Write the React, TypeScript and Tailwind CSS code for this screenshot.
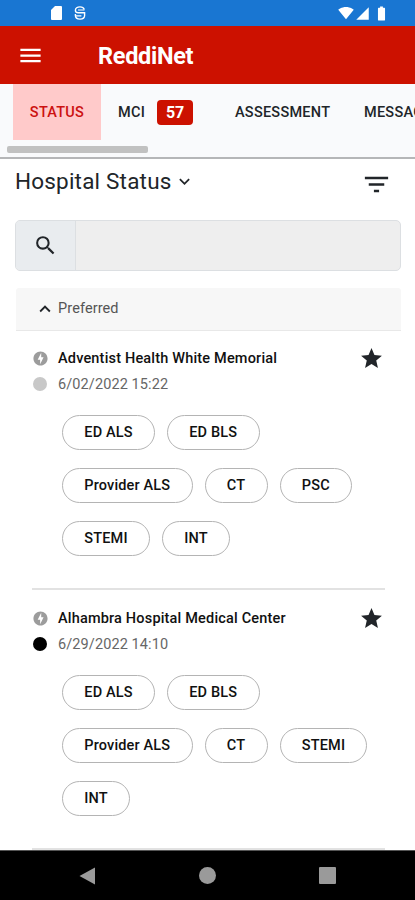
import clsx from 'clsx';
import { ReactNode } from 'react';
import {
  MdBatteryFull,
  MdExpandLess,
  MdExpandMore,
  MdFilterList,
  MdMenu,
  MdOfflineBolt,
  MdSearch,
  MdSignalCellular4Bar,
  MdSignalWifi4Bar,
  MdStar
} from 'react-icons/md';

interface IHospital {
  name: string;
  updated: string;
  open: boolean;
  services: string[];
}

const hospitals: IHospital[] = [
  {
    name: 'Adventist Health White Memorial',
    updated: '6/02/2022 15:22',
    open: false,
    services: ['ED ALS', 'ED BLS', 'Provider ALS', 'CT', 'PSC', 'STEMI', 'INT']
  },
  {
    name: 'Alhambra Hospital Medical Center',
    updated: '6/29/2022 14:10',
    open: true,
    services: ['ED ALS', 'ED BLS', 'Provider ALS', 'CT', 'STEMI', 'INT']
  }
];

const StatusBar = () => (
  <div className="flex h-[26px] shrink-0 items-center bg-[#1976d2] pl-[51px] pr-[25px] text-white">
    <svg width="11" height="14" viewBox="0 0 11 14" fill="currentColor">
      <path d="M4 0h6a1 1 0 0 1 1 1v12a1 1 0 0 1-1 1H1a1 1 0 0 1-1-1V4z" />
    </svg>
    <svg
      className="ml-[12px]"
      width="12"
      height="14"
      viewBox="0 0 12 14"
      fill="none"
      stroke="currentColor"
      strokeWidth="1.4">
      <path d="M10.300 3.400C9.700 1.700 8.200.9 6 .9 3.300.9 1.400 2.200 1.400 4.200c0 1.900 1.300 2.600 3 2.600h6.200v2.800c0 2.200-1.900 3.500-4.600 3.500s-4.600-1.300-4.600-3.500V8" />
      <path d="M4 4h6.500M1.400 9.900h6" strokeWidth="1.200" />
    </svg>
    <div className="ml-auto flex items-center">
      <MdSignalWifi4Bar size={16} />
      <MdSignalCellular4Bar className="ml-px" size={15} />
      <MdBatteryFull className="ml-[3px]" size={17} />
    </div>
  </div>
);

const Header = () => (
  <header className="flex h-[58px] shrink-0 items-center bg-[#cc1100] pl-[17px] text-white">
    <MdMenu size={27} />
    <h1 className="ml-[54px] mt-[3px] text-[23.5px] font-bold tracking-[-0.3px]">ReddiNet</h1>
  </header>
);

const Tab = ({ active, className, children }: { active?: boolean; className?: string; children: ReactNode }) => (
  <button
    className={clsx(
      'flex h-14 shrink-0 items-center pt-px text-[14.5px] font-medium tracking-[0.25px]',
      active ? 'bg-[#ffcaca] text-[#cc1111]' : 'text-[#212529]',
      className
    )}>
    {children}
  </button>
);

const Tabs = () => (
  <nav className="h-[75px] shrink-0 overflow-hidden border-b-2 border-[#b5b6b8] bg-[#f9fafc]">
    <div className="flex pl-[13px]">
      <Tab active className="w-[88px] justify-center">
        STATUS
      </Tab>
      <Tab className="ml-[17px] w-[75px] justify-between">
        MCI
        <span className="flex h-[25px] w-9 items-center justify-center rounded-[4px] bg-[#cc1100] text-base font-bold tracking-[-0.3px] text-white">
          57
        </span>
      </Tab>
      <Tab className="ml-[42px] w-[95px]">ASSESSMENT</Tab>
      <Tab className="ml-[34px]">MESSAGES</Tab>
    </div>
    <div className="ml-[7px] mt-[6px] h-[7px] w-[141px] rounded-[2px] bg-[#c1c1c1]" />
  </nav>
);

const Chip = ({ label }: { label: string }) => (
  <span className="flex h-[35px] items-center rounded-full border border-[#b4b4b4] px-[21.3px] text-[14.5px] font-medium tracking-[0.15px] text-[#111]">
    {label}
  </span>
);

const Hospital = ({ hospital }: { hospital: IHospital }) => (
  <li className="mx-4 h-[260px] border-b-2 border-[#e2e2e2] pt-[15px]">
    <div className="flex h-[26px] items-center">
      <MdOfflineBolt className="text-[#9c9c9c]" size={17} />
      <h2 className="ml-[9px] pt-[2px] text-[14.5px] font-medium tracking-[0.18px] text-[#111]">{hospital.name}</h2>
      <MdStar className="ml-auto mr-px text-[#212529]" size={25} />
    </div>
    <div className="flex h-[26px] items-center">
      <span className={clsx('ml-px size-[14px] rounded-full', hospital.open ? 'bg-black' : 'bg-[#c8c8c8]')} />
      <span className="ml-[11px] pt-px text-[14.5px] tracking-[0.1px] text-[#666]">{hospital.updated}</span>
    </div>
    <div className="ml-[30px] mt-[18px] flex flex-wrap gap-x-3 gap-y-[18px]">
      {hospital.services.map((service) => (
        <Chip key={service} label={service} />
      ))}
    </div>
  </li>
);

const SystemNav = () => (
  <div className="flex h-[50px] shrink-0 items-center justify-between border-t border-[#555] bg-black pl-[79px] pr-[79px]">
    <svg width="17" height="18" viewBox="0 0 17 18" fill="#9a9a9a">
      <path d="M16 .5v17L.5 9z" />
    </svg>
    <span className="size-[17px] rounded-full bg-[#9a9a9a]" />
    <span className="size-[17px] rounded-[1px] bg-[#9a9a9a]" />
  </div>
);

const App = () => {
  return (
    <div className="flex h-[900px] w-[415px] flex-col overflow-hidden bg-white font-['Roboto',sans-serif]">
      <StatusBar />
      <Header />
      <Tabs />
      <main className="min-h-0 flex-1 overflow-hidden pl-[15px] pr-[14px]">
        <div className="flex h-[61px] items-start justify-between pt-[8px]">
          <button className="flex items-center text-[22.5px] leading-7 tracking-[0.2px] text-[#212529]">
            Hospital Status
            <MdExpandMore className="ml-[2px]" size={21} />
          </button>
          <MdFilterList className="mr-[9px] mt-[2px] text-[#212529]" size={31} />
        </div>
        <div className="flex h-[51px] overflow-hidden rounded-[5px] border border-[#dcdfe2] bg-[#eee]">
          <span className="flex w-[60px] items-center justify-center border-r border-[#dcdfe2] bg-[#e9ecef]">
            <MdSearch className="text-[#212529]" size={25} />
          </span>
          <input className="min-w-0 flex-1 bg-transparent px-3 outline-none" />
        </div>
        <section className="ml-px mt-[17px]">
          <button className="flex h-[43px] w-full items-center rounded-t-[3px] border-b border-[#e8e8e8] bg-[#f7f7f7] pl-[18px] text-[14.5px] tracking-[0.1px] text-[#555]">
            <MdExpandLess className="mr-[2px] text-[#212529]" size={22} />
            Preferred
          </button>
          <ul className="-mt-px">
            {hospitals.map((hospital) => (
              <Hospital key={hospital.name} hospital={hospital} />
            ))}
          </ul>
        </section>
      </main>
      <SystemNav />
    </div>
  );
};

export default App;
